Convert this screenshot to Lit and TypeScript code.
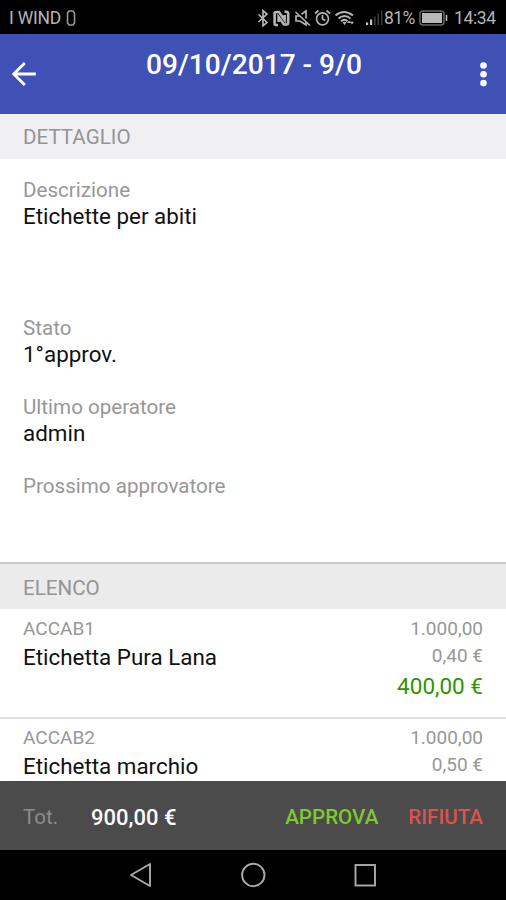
import { LitElement, html, css, svg, nothing } from "lit";
import { customElement } from "lit/decorators.js";

interface Field { label: string; value?: string; tall?: boolean }
interface Item { code: string; name: string; qty: string; price: string; total?: string }

const fields: Field[] = [
  { label: "Descrizione", value: "Etichette per abiti", tall: true },
  { label: "Stato", value: "1°approv." },
  { label: "Ultimo operatore", value: "admin" },
  { label: "Prossimo approvatore" },
];

const items: Item[] = [
  { code: "ACCAB1", name: "Etichetta Pura Lana", qty: "1.000,00", price: "0,40 €", total: "400,00 €" },
  { code: "ACCAB2", name: "Etichetta marchio", qty: "1.000,00", price: "0,50 €" },
];

const statusIcons = svg`
  <g fill="none" stroke="#b4b4b4" stroke-width="1.7">
    <path d="M2.5 5.5 L11 13.5 L7 16.8 V1.6 L11 5 L2.5 13"/>
    <path d="M39.5 3 L54 16.5"/>
    <path d="M43 7 H40 V12 H44 L50 16 V13 M45.5 5.2 L50 2 V9.5"/>
    <circle cx="66.5" cy="9.8" r="6"/>
    <path d="M66.5 6 V10 L69.3 11.5 M59 4.5 L62.5 1.5 M74 4.5 L70.5 1.5"/>
    <path d="M79.5 6.5 Q88 -.5 97 6.5 M82.5 9.5 Q88.5 4.5 94.5 9.5" stroke-width="2"/>
    <path d="M85 12.3 Q88.5 9.5 91.5 12.3" stroke-width="2"/>
  </g>
  <g fill="none" stroke="#b4b4b4" stroke-width="2.6">
    <path d="M22 16 H20 Q18.6 16 18.6 14 V5 Q18.6 3 20.5 3 H23 L28.6 11 V6"/>
    <path d="M28.5 2.8 H30.5 Q32.2 2.8 32.2 5 V13.5 Q32.2 15.5 30.3 15.5 H28 L22.6 8 V13"/>
  </g>
  <path d="M86.5 13 H90.5 L88.5 16.2 Z M91 14 L93 11.5 L95 14 Z M94 12.8 H98 L96 15.5 Z" fill="#b4b4b4"/>
  <path d="M110 13.5 h2.2 v2.5 h-2.2 Z M114 10.5 h2.2 V16 h-2.2 Z" fill="#c4c4c4"/>
  <path d="M118 7.5 h1.6 V16 h-1.6 Z M121.5 4.5 h1.6 V16 h-1.6 Z M125 1.5 h1.4 V16 h-1.4 Z" fill="#3e3e3e"/>`;

@customElement("app-root")
export class AppRoot extends LitElement {
  static styles = css`
    :host {
      display: flex;
      flex-direction: column;
      width: 100%;
      height: 900px;
      overflow: hidden;
      background: #fff;
      color: #111;
      font-family: Roboto, "Liberation Sans", sans-serif;
      font-size: 20.6px;
    }
    * { box-sizing: border-box; }
    svg { display: block; flex: none; }
    .status {
      flex: none;
      height: 34px;
      padding: 1px 10px 0 9px;
      display: flex;
      align-items: center;
      background: #000;
      color: #b4b4b4;
      font-size: 17.5px;
      line-height: 34px;
    }
    .carrier { width: 52px; white-space: nowrap; letter-spacing: -0.2px; }
    .sim { margin-left: 5px; }
    .icons { margin-left: auto; }
    .percent { margin-left: 1px; width: 31px; white-space: nowrap; letter-spacing: -0.6px; }
    .battery { margin-left: 4px; }
    .clock { width: 42px; margin-left: 6px; white-space: nowrap; letter-spacing: -0.35px; }
    .appbar {
      flex: none;
      height: 80px;
      padding: 0 17px 0 12px;
      display: flex;
      align-items: center;
      background: #3f51b5;
    }
    .title {
      flex: 1;
      margin: 0 5px 19px 0;
      text-align: center;
      color: #fff;
      font-size: 28.1px;
      font-weight: 500;
      line-height: 36px;
    }
    .section {
      flex: none;
      height: 45px;
      padding-left: 23px;
      line-height: 46px;
      background: #efeff4;
      color: #949494;
    }
    .section.list {
      height: 47px;
      border-top: 2px solid #cbcbcb;
      background: #ebebeb;
      line-height: 48px;
    }
    .fields { flex: none; height: 403px; padding: 18px 23px 0; }
    .field { height: 79px; }
    .field.tall { height: 138px; }
    .label { line-height: 26px; color: #979797; }
    .value { line-height: 27px; font-size: 22.4px; color: #111; }
    .items { flex: 1; min-height: 0; overflow: hidden; }
    .item {
      display: flex;
      justify-content: space-between;
      height: 110px;
      padding: 6px 23px 0;
      border-bottom: 2px solid #dedede;
    }
    .item:last-child { height: 62px; padding-top: 5px; border-bottom: 0; }
    .code { line-height: 27px; font-size: 19px; color: #979797; }
    .name { line-height: 31px; font-size: 22.4px; }
    .amounts { text-align: right; color: #979797; font-size: 19px; line-height: 27px; }
    .total { color: #2f9400; font-size: 22.5px; line-height: 34px; }
    .footer {
      flex: none;
      height: 69px;
      padding: 3px 23px 0;
      display: flex;
      align-items: center;
      background: #4b4b4b;
      font-weight: 500;
    }
    .tot { width: 68px; color: #8c8c8c; font-weight: 400; }
    .sum { color: #fff; font-size: 22px; }
    .approve { margin-left: auto; color: #7fc92e; }
    .reject { margin-left: 30px; color: #dc5151; }
    .nav {
      flex: none;
      height: 50px;
      display: flex;
      align-items: center;
      justify-content: center;
      gap: 86px;
      background: #000;
    }
  `;

  render() {
    return html`
      <div class="status">
        <span class="carrier">I WIND</span>
        <svg class="sim" width="10" height="18" viewBox="0 0 10 18">
          <path d="M3 2 H7 L8.5 4 V14 L7 16 H3 L1.5 14 V4 Z" fill="none" stroke="#999" stroke-width="1.6"/>
        </svg>
        <svg class="icons" width="127" height="18" viewBox="0 0 127 18">${statusIcons}</svg>
        <span class="percent">81%</span>
        <svg class="battery" width="29" height="16" viewBox="0 0 29 16">
          <rect x="1" y="1" width="24" height="14" rx="3" fill="none" stroke="#666" stroke-width="1.5"/>
          <rect x="3" y="3" width="20" height="10" fill="#b8b8b8"/>
          <path d="M27.5 5 V11" stroke="#b8b8b8" stroke-width="1.6"/>
        </svg>
        <span class="clock">14:34</span>
      </div>
      <div class="appbar">
        <svg width="24" height="24" viewBox="0 0 24 24">
          <path d="M12.8 1 L1.8 12 L12.8 23 M1.8 12 H23.8" fill="none" stroke="#fff" stroke-width="2.8"/>
        </svg>
        <div class="title">09/10/2017 - 9/0</div>
        <svg width="12" height="26" viewBox="0 0 12 26" fill="#fff">
          <circle cx="6.5" cy="4.5" r="3.3"/><circle cx="6.5" cy="13.3" r="3.3"/><circle cx="6.5" cy="22.1" r="3.3"/>
        </svg>
      </div>
      <div class="section"><span>DETTAGLIO</span></div>
      <div class="fields">
        ${fields.map((f) => html`
          <div class="field ${f.tall ? "tall" : ""}">
            <div class="label"><span>${f.label}</span></div>
            ${f.value ? html`<div class="value"><span>${f.value}</span></div>` : nothing}
          </div>`)}
      </div>
      <div class="section list"><span>ELENCO</span></div>
      <div class="items">
        ${items.map((i) => html`
          <div class="item">
            <div>
              <div class="code">${i.code}</div>
              <div class="name">${i.name}</div>
            </div>
            <div class="amounts">
              <div>${i.qty}</div>
              <div>${i.price}</div>
              ${i.total ? html`<div class="total">${i.total}</div>` : nothing}
            </div>
          </div>`)}
      </div>
      <div class="footer">
        <span class="tot">Tot.</span>
        <span class="sum">900,00 €</span>
        <span class="approve">APPROVA</span>
        <span class="reject">RIFIUTA</span>
      </div>
      <div class="nav">
        <svg width="26" height="26" viewBox="0 0 26 26" fill="none" stroke="#aaa" stroke-width="1.9">
          <path d="M22 2 V24 L3 13 Z" stroke-linejoin="round"/>
        </svg>
        <svg width="26" height="26" viewBox="0 0 26 26" fill="none" stroke="#aaa" stroke-width="1.9">
          <circle cx="13.3" cy="13" r="11.2"/>
        </svg>
        <svg width="26" height="26" viewBox="0 0 26 26" fill="none" stroke="#aaa" stroke-width="1.9">
          <rect x="3.5" y="3" width="19.5" height="20.5"/>
        </svg>
      </div>`;
  }
}
